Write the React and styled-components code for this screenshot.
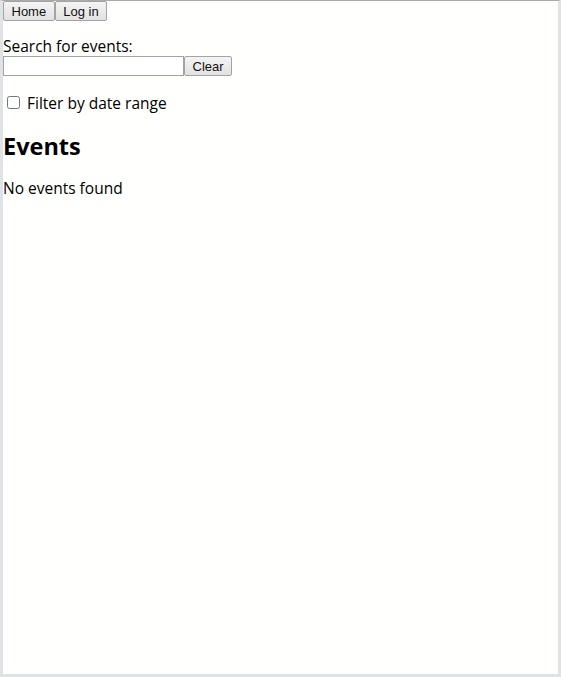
import React from 'react';
import styled, { createGlobalStyle } from 'styled-components';

const GlobalStyle = createGlobalStyle`
	html, body {
		margin: 0;
		padding: 0;
		background: #dfe3e5;
	}
	body {
		font-family: "Open Sans", "DejaVu Sans", sans-serif;
		font-size: 15.5px;
		color: #000;
	}
`;

const Frame = styled.div`
	box-sizing: border-box;
	height: 677px;
	background: #fffffd;
	border-top: 1px solid #a9abab;
	border-left: 3px solid #dfe3e5;
	border-right: 3px solid #dfe3e5;
	border-bottom: 3px solid #dfe3e5;
	overflow: hidden;
`;

const Nav = styled.nav`
	display: flex;
`;

const Button = styled.button`
	box-sizing: border-box;
	height: 20px;
	margin: 0;
	padding: 0 7.5px;
	font-family: "Liberation Sans", Arial, sans-serif;
	font-size: 13px;
	color: #111;
	background: linear-gradient(#f4f4f4, #e2e2e2);
	border: 1px solid #a3a3a3;
	border-radius: 2px;
	cursor: pointer;
`;

const SearchBlock = styled.div`
	margin-top: 16px;
`;

const Label = styled.label`
	display: block;
	line-height: 19px;
`;

const SearchRow = styled.div`
	display: flex;
`;

const Input = styled.input`
	box-sizing: border-box;
	width: 181px;
	height: 20px;
	margin: 0;
	padding: 1px 2px;
	border: 1px solid #a3a3a3;
	background: #fff;
	font-size: 13px;
`;

const FilterRow = styled.label`
	display: flex;
	align-items: center;
	margin-top: 16px;
	height: 21px;
`;

const Checkbox = styled.input`
	width: 13px;
	height: 13px;
	margin: 0 7px 0 4px;
`;

const Heading = styled.h2`
	font-size: 23.5px;
	font-weight: 700;
	margin: 19px 0 0;
	line-height: 28px;
`;

const Empty = styled.p`
	margin: 19px 0 0;
	line-height: 19px;
`;

export default function App() {
	return (
		<>
			<GlobalStyle />
			<Frame>
				<Nav>
					<Button>Home</Button>
					<Button>Log in</Button>
				</Nav>
				<SearchBlock>
					<Label htmlFor="search">Search for events:</Label>
					<SearchRow>
						<Input id="search" type="text" />
						<Button>Clear</Button>
					</SearchRow>
				</SearchBlock>
				<FilterRow>
					<Checkbox type="checkbox" />
					Filter by date range
				</FilterRow>
				<Heading>Events</Heading>
				<Empty>No events found</Empty>
			</Frame>
		</>
	);
}
